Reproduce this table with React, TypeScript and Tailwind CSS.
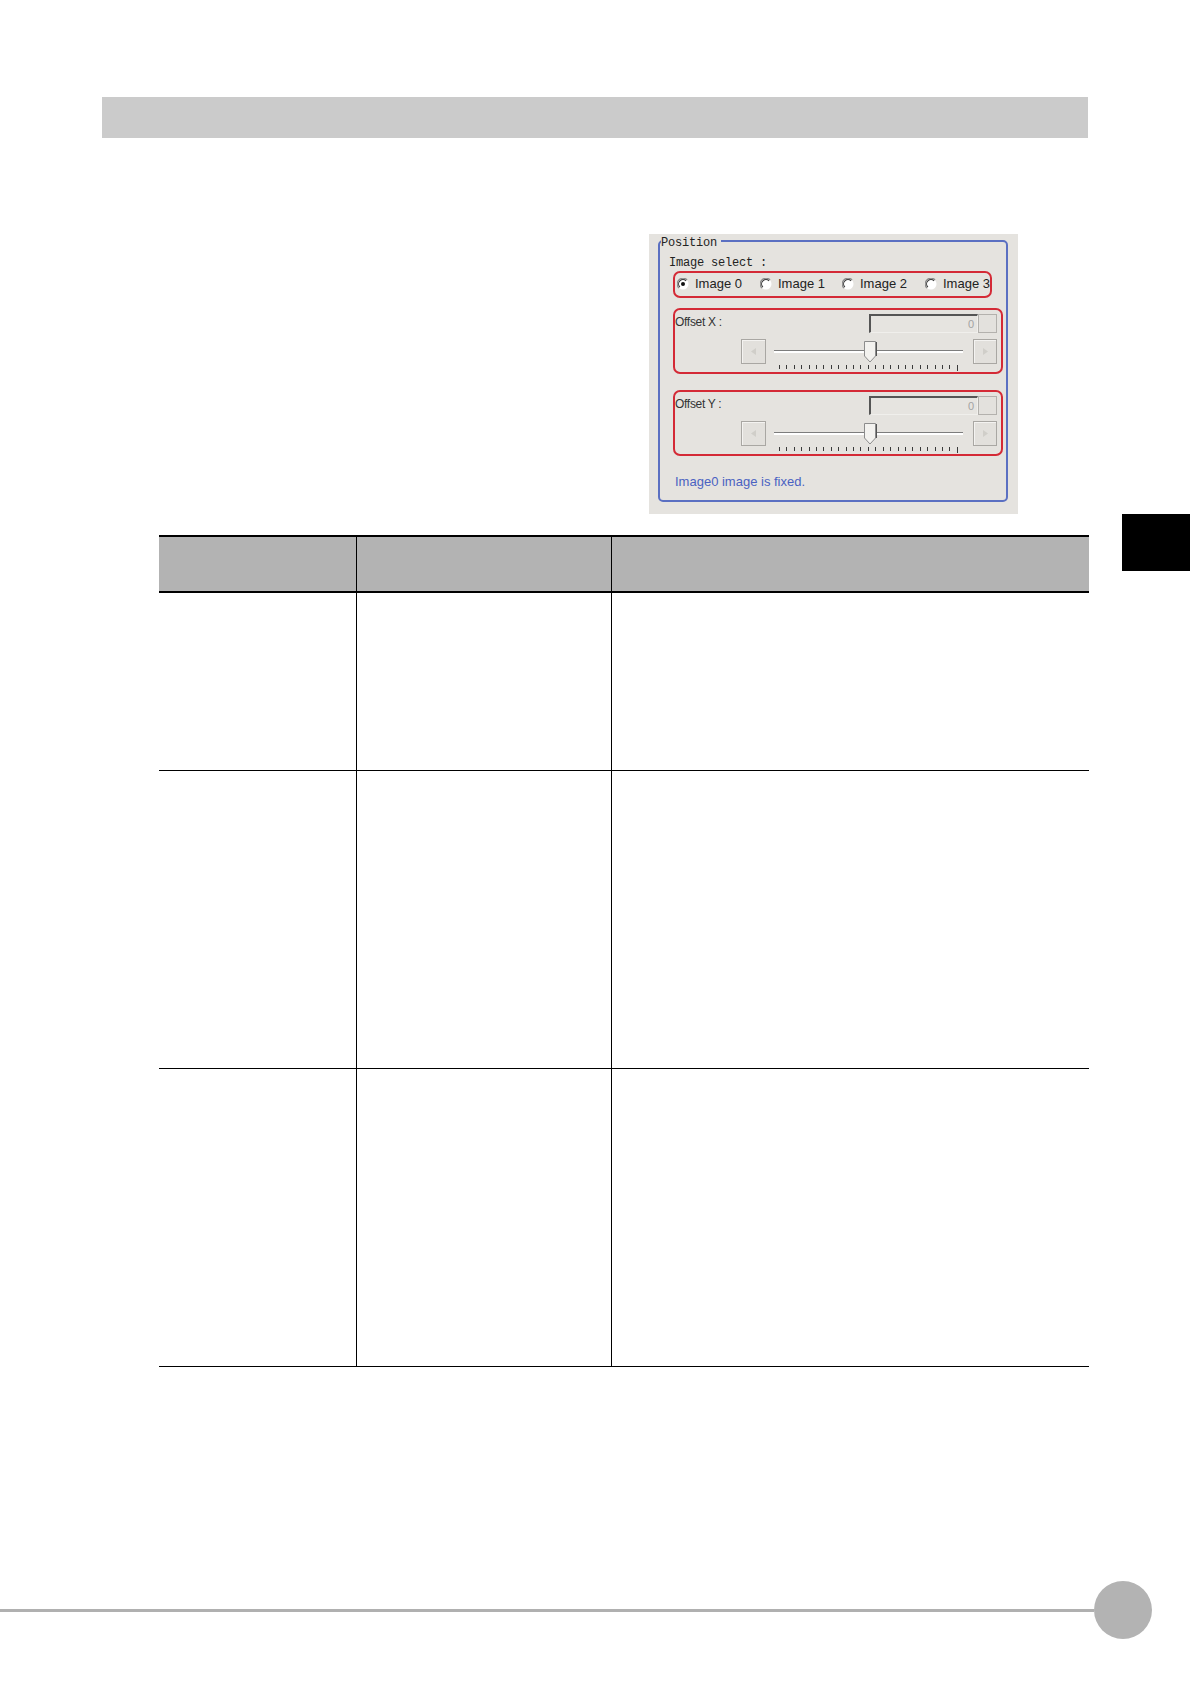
import React from "react";

const Radio = ({ checked, label, cls }: { checked?: boolean; label: string; cls: string }) => (
  <div className={`flex items-center gap-[6px] ${cls}`}>
    <svg width="12" height="12" viewBox="0 0 12 12">
      <circle cx="6" cy="6" r="5.5" fill="#ffffff" />
      <path d="M1.9 10.1 A5.6 5.6 0 0 1 10.1 1.9" stroke="#8a8a8a" strokeWidth="1.2" fill="none" />
      <path d="M2.9 9.1 A4.3 4.3 0 0 1 9.1 2.9" stroke="#3a3a3a" strokeWidth="1.1" fill="none" />
      {checked && <circle cx="6" cy="6" r="2" fill="#111" />}
    </svg>
    <span className="text-[13px] leading-[15px] text-[#222]">{label}</span>
  </div>
);

const SmallBtn = ({ dir, w }: { dir: "l" | "r"; w: string }) => (
  <div className={`${w} h-[25px] border border-[#a9a7a3] bg-[#e2e0dc] flex items-center justify-center shadow-[inset_1px_1px_0_#f4f3f1]`}>
    <svg width="6" height="7" viewBox="0 0 6 7">
      {dir === "l" ? <polygon points="5,0 5,7 0,3.5" fill="#d0cec9" /> : <polygon points="1,0 1,7 6,3.5" fill="#d0cec9" />}
    </svg>
  </div>
);

const OffsetBox = ({ label }: { label: string }) => (
  <div className="ml-[4px] w-[330px] h-[66px] border-2 border-[#d42a36] rounded-[7px] flex flex-col">
    <div className="flex justify-between items-start pr-[4px]">
      <span className="mt-[5px] text-[12px] leading-[14px] text-[#333] tracking-[-0.3px]">{label}</span>
      <div className="mt-[4px] flex">
        <div className="w-[109px] h-[19px] border-t-2 border-l-2 border-t-[#555] border-l-[#555] border-b border-r border-b-[#f0efec] border-r-[#f0efec] bg-[#e6e4e0] flex items-center justify-end pr-[3px]">
          <span className="text-[11px] leading-[12px] text-[#a3a3a3]">0</span>
        </div>
        <div className="w-[19px] h-[19px] border border-[#b3b1ad] bg-[#e3e1dd]" />
      </div>
    </div>
    <div className="mt-[6px] flex items-start pl-[66px]">
      <SmallBtn dir="l" w="w-[25px]" />
      <div className="w-[207px] flex flex-col">
        <div className="relative h-[25px]">
          <div className="mt-[11px] ml-[8px] mr-[10px] h-[3px] border-t border-[#7d7d7d] bg-[#ffffff]" />
          <svg className="absolute left-[98px] top-[2px]" width="13" height="22" viewBox="0 0 13 22">
            <polygon points="0.5,0.5 11.5,0.5 11.5,15 6,21 0.5,15" fill="#f3f2ef" stroke="#8c8c8c" strokeWidth="1" />
            <line x1="12.5" y1="1" x2="12.5" y2="15" stroke="#555" strokeWidth="1" />
          </svg>
        </div>
        <div className="ml-[13px] mr-[15px] h-[8px] flex justify-between items-start">
          {Array.from({ length: 25 }).map((_, i) => (
            <div key={i} className={`w-px bg-[#3a3a3a] ${i === 24 ? "h-[6px]" : "h-[4px]"} mt-[1px]`} />
          ))}
        </div>
      </div>
      <SmallBtn dir="r" w="w-[24px]" />
    </div>
  </div>
);

const Panel = () => (
  <div className="ml-[649px] w-[369px] h-[280px] bg-[#e5e3df] pt-[6px] pl-[9px]">
    <div className="relative w-[350px] h-[262px] border-2 border-[#5b70c2] rounded-[5px] flex flex-col">
      <span className="absolute left-[1px] top-[-6px] bg-[#e5e3df] pr-[4px] text-[12px] leading-[14px] text-[#222] tracking-[-0.2px] font-['Liberation_Mono',monospace]">
        Position
      </span>
      <div className="mt-[14px] pl-[9px] text-[12px] leading-[14px] text-[#222] tracking-[-0.2px] font-['Liberation_Mono',monospace]">
        Image select :
      </div>
      <div className="mt-[1px] ml-[13px] w-[319px] h-[27px] border-2 border-[#d42a36] rounded-[7px] flex items-center pl-[2px] pb-[2px]">
        <Radio checked label="Image 0" cls="w-[83px]" />
        <Radio label="Image 1" cls="w-[82px]" />
        <Radio label="Image 2" cls="w-[83px]" />
        <Radio label="Image 3" cls="" />
      </div>
      <div className="mt-[10px] ml-[9px]">
        <OffsetBox label="Offset X :" />
      </div>
      <div className="mt-[16px] ml-[9px]">
        <OffsetBox label="Offset Y :" />
      </div>
      <div className="mt-[18px] pl-[15px] text-[13px] leading-[16px] text-[#4a62c2]">Image0 image is fixed.</div>
    </div>
  </div>
);

const Row = ({ h, header }: { h: string; header?: boolean }) => (
  <div
    className={`grid grid-cols-[198px_255px_477px] ${h} ${
      header ? "bg-[#b3b3b3] border-t-2 border-b-2" : "border-b-[1.5px]"
    } border-black`}
  >
    <div className="border-r-[1.5px] border-black" />
    <div className="border-r-[1.5px] border-black" />
    <div />
  </div>
);

export default function App() {
  return (
    <div className="relative w-[1190px] h-[1684px] bg-white overflow-hidden font-['Liberation_Sans',Arial,sans-serif]">
      <div className="pt-[97px]">
        <div className="ml-[102px] w-[986px] h-[41px] bg-[#cbcbcb]" />
        <div className="mt-[96px]">
          <Panel />
        </div>
        <div className="mt-[21px] ml-[159px] w-[930px]">
          <Row header h="h-[58px]" />
          <Row h="h-[178px]" />
          <Row h="h-[298px]" />
          <Row h="h-[298px]" />
        </div>
        <div className="mt-[214px] w-[1152px] h-[58px] flex items-center">
          <div className="flex-1 h-[3px] bg-[#b0b0b0]" />
          <div className="w-[58px] h-[58px] rounded-full bg-[#b3b3b3]" />
        </div>
      </div>
      <div className="absolute left-[1122px] top-[514px] w-[68px] h-[57px] bg-black" />
    </div>
  );
}
